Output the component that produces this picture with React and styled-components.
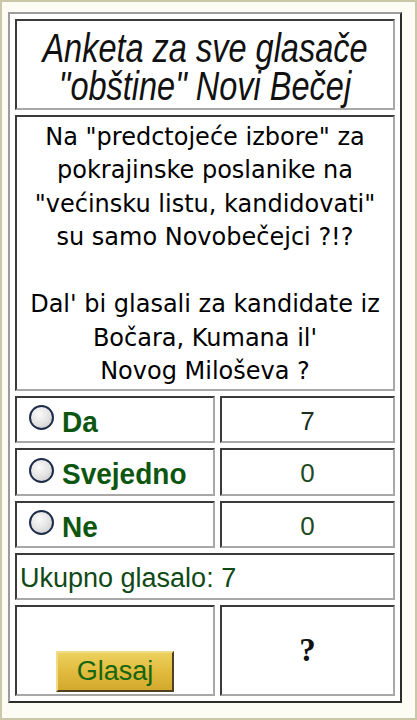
import React from 'react';
import styled, { createGlobalStyle } from 'styled-components';

const GlobalStyle = createGlobalStyle`
  html, body {
    margin: 0;
    padding: 0;
    background: #fbfbf4;
  }
`;

const Frame = styled.div`
  box-sizing: border-box;
  width: 417px;
  height: 720px;
  border: 2px solid #c9c7a7;
  background: #fcfcf5;
  padding: 10px 0 0 6px;
`;

const PollTable = styled.div`
  box-sizing: border-box;
  width: 394px;
  display: grid;
  grid-template-columns: 200px 175px;
  grid-template-rows: 91px 276px 47px 48px 47px 47px 91px;
  gap: 5px;
  padding: 5px;
  background: #ffffff;
  border: 2px solid;
  border-color: #9c9c9c #2c2c2c #2c2c2c #9c9c9c;
`;

const Cell = styled.div`
  box-sizing: border-box;
  grid-column: ${(p) => (p.$wide ? '1 / span 2' : 'auto')};
  border: 2px solid;
  border-color: #3a3a3a #a8a8a8 #a8a8a8 #3a3a3a;
  display: flex;
  align-items: ${(p) => p.$align || 'center'};
  justify-content: ${(p) => p.$justify || 'center'};
  padding: ${(p) => p.$pad || '0'};
  overflow: hidden;
`;

/* narrow italic heading: regular italic stretched upward */
const Title = styled.div`
  font-family: "Liberation Sans", Arial, sans-serif;
  font-style: italic;
  font-size: 32.5px;
  line-height: 29.5px;
  color: #111;
  text-align: center;
  white-space: nowrap;
  margin-top: 6px;
  transform: scaleY(1.26);
`;

const Question = styled.div`
  font-family: "DejaVu Sans", Verdana, sans-serif;
  font-size: 24px;
  line-height: 33.5px;
  color: #000;
  text-align: center;
  padding-top: 3px;
  white-space: nowrap;
`;

const Option = styled.label`
  display: flex;
  align-items: center;
  gap: 8px;
  font-family: "Liberation Sans", Arial, sans-serif;
  font-weight: bold;
  font-size: 28px;
  color: #0c560f;
  cursor: pointer;
`;

const Radio = styled.span`
  box-sizing: border-box;
  width: 25px;
  height: 25px;
  border-radius: 50%;
  border: 2px solid #1d2c48;
  background: radial-gradient(circle at 40% 35%, #fafafa 0%, #e2e2e2 55%, #bdbdbd 100%);
  flex-shrink: 0;
  margin-top: -4px;
`;

const OptionText = styled.span`
  display: inline-block;
  padding-top: 4px;
  transform: scaleY(1.08);
`;

const Count = styled.span`
  font-family: "Liberation Sans", Arial, sans-serif;
  font-size: 26px;
  color: ${(p) => (p.$dark ? '#1c2e1c' : '#1f4a1f')};
  padding-top: 3px;
`;

const Total = styled.span`
  font-family: "Liberation Sans", Arial, sans-serif;
  font-size: 27px;
  color: #0f4a16;
`;

const VoteButton = styled.button`
  box-sizing: border-box;
  width: 118px;
  height: 41px;
  margin-bottom: 2px;
  font-family: "Liberation Sans", Arial, sans-serif;
  font-size: 27px;
  color: #17650f;
  background: linear-gradient(to bottom, #ecd15e 0%, #e1bb3e 50%, #d3a92c 100%);
  border: 2px solid;
  border-color: #f0dc86 #4e4020 #4e4020 #f0dc86;
  padding: 0;
  cursor: pointer;
`;

const Help = styled.span`
  font-family: "Liberation Serif", "Times New Roman", serif;
  font-weight: bold;
  font-size: 33px;
  color: #111;
`;

const options = [
  { label: 'Da', votes: 7 },
  { label: 'Svejedno', votes: 0 },
  { label: 'Ne', votes: 0 },
];

const App = () => {
  const total = options.reduce((sum, o) => sum + o.votes, 0);

  return (
    <>
      <GlobalStyle />
      <Frame>
        <PollTable>
          <Cell $wide>
            <Title>
              Anketa za sve glasače
              <br />
              "obštine" Novi Bečej
            </Title>
          </Cell>

          <Cell $wide>
            <Question>
              Na "predctojeće izbore" za
              <br />
              pokrajinske poslanike na
              <br />
              "većinsku listu, kandidovati"
              <br />
              su samo Novobečejci ?!?
              <br />
              <br />
              Dal' bi glasali za kandidate iz
              <br />
              Bočara, Kumana il'
              <br />
              Novog Miloševa ?
            </Question>
          </Cell>

          {options.map((o) => (
            <React.Fragment key={o.label}>
              <Cell $justify="flex-start" $pad="0 0 0 12px">
                <Option>
                  <Radio />
                  <OptionText>{o.label}</OptionText>
                </Option>
              </Cell>
              <Cell>
                <Count $dark={o.votes > 0}>{o.votes}</Count>
              </Cell>
            </React.Fragment>
          ))}

          <Cell $wide $justify="flex-start" $pad="4px 0 0 3px">
            <Total>Ukupno glasalo: {total}</Total>
          </Cell>

          <Cell $align="flex-end">
            <VoteButton type="button">Glasaj</VoteButton>
          </Cell>
          <Cell>
            <Help>?</Help>
          </Cell>
        </PollTable>
      </Frame>
    </>
  );
};

export default App;
